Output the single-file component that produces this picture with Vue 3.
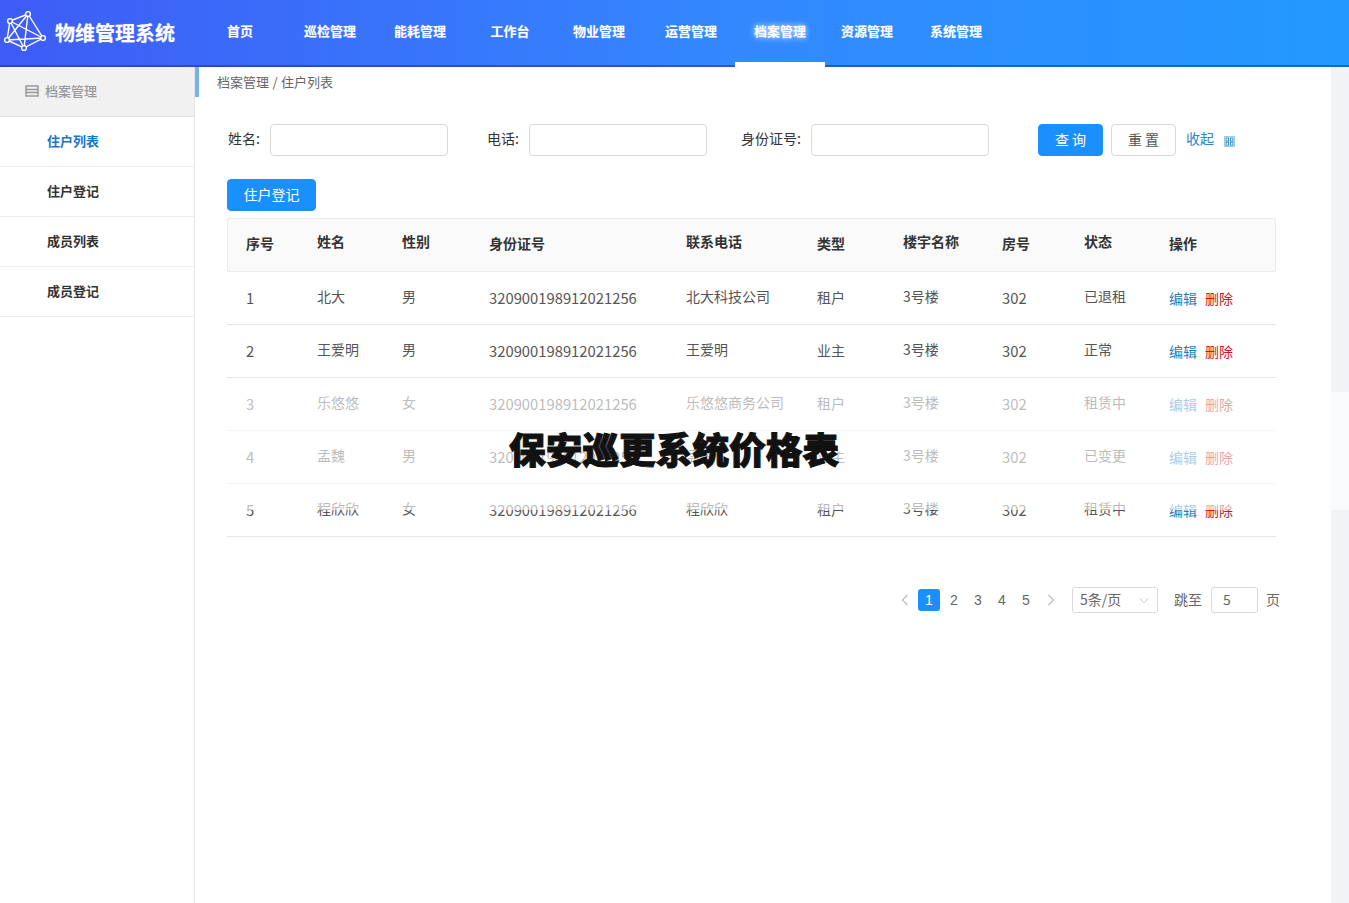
<script setup>
const navItems = ['首页', '巡检管理', '能耗管理', '工作台', '物业管理', '运营管理', '档案管理', '资源管理', '系统管理']
const sideItems = ['住户列表', '住户登记', '成员列表', '成员登记']
const heads = ['序号', '姓名', '性别', '身份证号', '联系电话', '类型', '楼宇名称', '房号', '状态', '操作']
const rows = [
  ['1', '北大', '男', '北大科技公司', '租户', '已退租'],
  ['2', '王爱明', '男', '王爱明', '业主', '正常'],
  ['3', '乐悠悠', '女', '乐悠悠商务公司', '租户', '租赁中'],
  ['4', '孟魏', '男', '孟魏', '业主', '已变更'],
  ['5', '程欣欣', '女', '程欣欣', '租户', '租赁中'],
]
</script>

<template>
  <div class="page">
    <header class="topbar">
      <div class="brand">
        <svg class="logo" viewBox="3 10 46 46" fill="none" stroke="#fff" stroke-width="1.4">
          <path d="M28 14 L10 21 L7 40 L24 48 L43 38 Z" />
          <path d="M28 14 L7 40 M28 14 L24 48 M10 21 L43 38 M10 21 L24 48 M7 40 L43 38" />
          <circle cx="28" cy="14" r="2.4" fill="#3f5ef6" />
          <circle cx="10" cy="21" r="2.4" fill="#3f5ef6" />
          <circle cx="7" cy="40" r="2.4" fill="#3f5ef6" />
          <circle cx="24" cy="48" r="2.4" fill="#3f5ef6" />
          <circle cx="43" cy="38" r="2.4" fill="#3f5ef6" />
        </svg>
        <span class="brand-name">物维管理系统</span>
      </div>
      <nav class="nav">
        <a v-for="item in navItems" :key="item" class="nav-item" :class="{ active: item === '档案管理' }">{{ item }}</a>
      </nav>
    </header>

    <div class="body">
      <aside class="side">
        <div class="side-title">
          <svg class="side-icon" viewBox="0 0 14 12" fill="none" stroke="#999" stroke-width="1.5">
            <rect x="1" y="1" width="12" height="10" />
            <path d="M1 4.5 H13 M1 7.5 H13" />
          </svg>
          <span>档案管理</span>
        </div>
        <a v-for="(item, i) in sideItems" :key="item" class="side-item" :class="{ current: i === 0 }">{{ item }}</a>
      </aside>

      <main class="main">
        <div class="crumb"><span class="crumb-mark"></span>档案管理 / 住户列表</div>

        <form class="filters">
          <label class="field name-field"><span class="label-text">姓名:</span><span class="input"></span></label>
          <label class="field phone-field"><span class="label-text">电话:</span><span class="input"></span></label>
          <label class="field id-field"><span class="label-text">身份证号:</span><span class="input"></span></label>
          <button type="button" class="btn primary">查 询</button>
          <button type="button" class="btn">重 置</button>
          <a class="collapse">收起</a>
          <svg class="collapse-icon" viewBox="0 0 11 11" fill="none" stroke="#2a8fc4" stroke-width="1">
            <rect x="0.5" y="0.5" width="10" height="10" stroke-opacity=".45" />
            <rect x="2" y="2" width="2.6" height="3" />
            <rect x="6.4" y="2" width="2.6" height="3" />
            <rect x="2" y="6.2" width="2.6" height="3" />
            <rect x="6.4" y="6.2" width="2.6" height="3" />
          </svg>
        </form>

        <button type="button" class="btn primary add">住户登记</button>

        <div class="table">
          <div class="row head">
            <div v-for="h in heads" :key="h" class="cell">{{ h }}</div>
          </div>
          <div v-for="r in rows" :key="r[0]" class="row item">
            <div class="cell num">{{ r[0] }}</div>
            <div class="cell up">{{ r[1] }}</div>
            <div class="cell up">{{ r[2] }}</div>
            <div class="cell num">320900198912021256</div>
            <div class="cell up">{{ r[3] }}</div>
            <div class="cell">{{ r[4] }}</div>
            <div class="cell up">3号楼</div>
            <div class="cell num">302</div>
            <div class="cell up">{{ r[5] }}</div>
            <div class="cell ops"><a class="edit">编辑</a><a class="del">删除</a></div>
          </div>
        </div>

        <div class="pager">
          <svg class="arrow" viewBox="0 0 8 12" fill="none" stroke="#bbb" stroke-width="1.1"><path d="M6.5 1 L1.5 6 L6.5 11" /></svg>
          <span class="page-no on">1</span>
          <span class="page-no">2</span>
          <span class="page-no">3</span>
          <span class="page-no">4</span>
          <span class="page-no">5</span>
          <svg class="arrow next" viewBox="0 0 8 12" fill="none" stroke="#bbb" stroke-width="1.1"><path d="M1.5 1 L6.5 6 L1.5 11" /></svg>
          <div class="size-select">
            <span class="pager-text">5条/页</span>
            <svg class="chev" viewBox="0 0 12 8" fill="none" stroke="#bbb" stroke-width="1.1"><path d="M1 1.5 L6 6.5 L11 1.5" /></svg>
          </div>
          <span class="jump pager-text">跳至</span>
          <span class="jump-input">5</span>
          <span class="jump-unit pager-text">页</span>
        </div>
      </main>
      <div class="rail"></div>
    </div>

    <div class="veil"></div>
    <div class="headline">保安巡更系统价格表</div>
  </div>
</template>

<style>
html, body { margin: 0; background: #fff; }
</style>

<style scoped>
.page {
  position: relative;
  width: 1349px;
  height: 903px;
  overflow: hidden;
  font-family: "Noto Sans CJK SC", "Noto Sans", sans-serif;
  font-size: 14px;
  color: #333;
  background: #fff;
}
.topbar {
  display: flex;
  height: 67px;
  box-sizing: border-box;
  border-bottom: 2px solid rgba(25, 60, 120, .55);
  background: linear-gradient(90deg, #3e5cf6 0%, #3388ff 55%, #2399ff 100%) border-box;
  color: #fff;
}
.brand { display: flex; align-items: center; width: 195px; flex: none; padding-left: 3px; box-sizing: border-box; }
.logo { width: 46px; height: 46px; flex: none; }
.brand-name { margin-left: 6px; font-size: 20px; font-weight: 700; white-space: nowrap; line-height: 28px; text-shadow: 0 0 1px rgba(255,255,255,.5); }
.nav { display: flex; }
.nav-item {
  display: block;
  position: relative;
  width: 90px;
  height: 65px;
  line-height: 62px;
  text-align: center;
  font-size: 13px;
  font-weight: 700;
  text-shadow: 0 0 1px rgba(255,255,255,.3);
}
.nav-item.active { text-shadow: 0 0 6px rgba(255,255,255,.9); }
.nav-item.active::after {
  content: "";
  position: absolute;
  left: 0;
  right: 0;
  bottom: -2px;
  height: 5px;
  background: #fff;
}
.nav-item:nth-child(5) { margin-left: -1px; }
.nav-item:nth-child(6) { margin-left: 2px; }
.nav-item:nth-child(7) { margin-left: -1px; }
.nav-item:nth-child(8) { margin-left: -3px; }
.nav-item:nth-child(9) { margin-left: -1px; }

.body { display: flex; height: 836px; }
.side { width: 195px; flex: none; box-sizing: border-box; border-right: 1px solid #e4e4e4; }
.side-title {
  display: flex;
  align-items: center;
  height: 50px;
  box-sizing: border-box;
  padding: 0 0 2px 25px;
  background: #f1f1f1;
  border-bottom: 1px solid #e2e2e2;
  color: #999;
  font-size: 13px;
  font-weight: 500;
}
.side-icon { width: 14px; height: 12px; margin-right: 6px; }
.side-item {
  display: block;
  height: 50px;
  line-height: 48px;
  box-sizing: border-box;
  padding-left: 47px;
  border-bottom: 1px solid #eee;
  font-size: 13px;
  font-weight: 700;
  color: #333;
}
.side-item.current { color: #1876c9; }

.main { flex: 1; min-width: 0; position: relative; padding-left: 32px; }
.crumb { height: 30px; line-height: 29px; margin-left: -10px; font-size: 13px; word-spacing: .5px; color: #666; }
.crumb-mark { position: absolute; left: 0; top: 0; width: 4px; height: 30px; background: #74b4ee; }

.filters { display: flex; align-items: center; height: 32px; margin-top: 27px; font-size: 14px; color: #333; }
.field { display: flex; align-items: center; white-space: nowrap; box-sizing: border-box; }
.label-text { margin-bottom: 4px; }
.input {
  display: block;
  width: 178px;
  height: 32px;
  box-sizing: border-box;
  margin-left: 10px;
  border: 1px solid #d9d9d9;
  border-radius: 4px;
}
.name-field { width: 260px; padding-left: 1px; }
.phone-field { width: 254px; }
.id-field { width: 297px; }
.btn {
  display: block;
  width: 65px;
  height: 32px;
  padding: 0 0 2px;
  border: 1px solid #d9d9d9;
  border-radius: 4px;
  background: #fff;
  color: #555;
  font: inherit;
  font-size: 14px;
}
.btn.primary { background: #1a90ff; border-color: #1a90ff; color: #fff; margin-right: 8px; }
.collapse { margin-left: 10px; margin-bottom: 4px; color: #2a86c8; font-size: 14px; }
.collapse-icon { width: 11px; height: 11px; margin-left: 10px; margin-top: 3px; }
.add { width: 89px; margin-top: 23px; }

.table { width: 1049px; margin-top: 7px; }
.row {
  display: grid;
  grid-template-columns: 90px 85px 87px 197px 131px 86px 99px 82px 85px 107px;
  height: 53px;
  box-sizing: border-box;
  border-bottom: 1px solid #e6e6e6;
  align-items: center;
  color: #555;
}
.row .cell:first-child { padding-left: 19px; }
.item { padding-bottom: 2px; }
.head {
  height: 54px;
  padding-bottom: 4px;
  border: 1px solid #ebebeb;
  border-radius: 2px;
  background: #fafafa;
  color: #333;
  font-size: 14px;
  font-weight: 700;
}
.head .cell { margin-left: -1px; }
.head .cell:nth-child(2),
.head .cell:nth-child(3),
.head .cell:nth-child(5),
.head .cell:nth-child(7),
.head .cell:nth-child(9) { margin-bottom: 4px; }
.cell { white-space: nowrap; }
.num { font-size: 14.8px; }
.up { position: relative; top: -1px; }
.ops { font-size: 14px; position: relative; top: 1px; }
.edit { color: #1c7fc4; }
.del { margin-left: 8px; color: #d0121b; }

.pager { display: flex; align-items: center; height: 26px; margin-top: 50px; margin-left: 674px; font-size: 14px; color: #666; white-space: nowrap; }
.pager-text { margin-bottom: 2px; }
.arrow { width: 8px; height: 12px; margin-right: 9px; }
.arrow.next { margin-left: 8px; margin-right: 17px; }
.page-no { display: block; width: 22px; height: 22px; line-height: 22px; margin-right: 2px; text-align: center; font-family: "Liberation Sans", sans-serif; }
.page-no:nth-of-type(2) { margin-left: 1px; }
.page-no.on { background: #1a90ff; color: #fff; border-radius: 3px; }
.size-select {
  display: flex;
  align-items: center;
  justify-content: space-between;
  width: 86px;
  height: 26px;
  box-sizing: border-box;
  padding: 0 8px 0 7px;
  border: 1px solid #d9d9d9;
  border-radius: 3px;
}
.chev { width: 10px; height: 7px; }
.jump { margin-left: 16px; }
.jump-input {
  display: block;
  width: 47px;
  height: 26px;
  line-height: 22px;
  box-sizing: border-box;
  margin-left: 9px;
  padding-left: 11px;
  border: 1px solid #d9d9d9;
  border-radius: 3px;
}
.jump-unit { margin-left: 8px; }

.rail { width: 18px; flex: none; background: #f1f3f6; }

.veil {
  position: absolute;
  left: 197px;
  right: 0;
  top: 392px;
  height: 118px;
  background: rgba(255,255,255,.6);
}
.headline {
  position: absolute;
  left: 509px;
  top: 422px;
  font-size: 36.7px;
  line-height: 52px;
  font-weight: 900;
  color: #111;
  -webkit-text-stroke: 1px #111;
  white-space: nowrap;
}
</style>
